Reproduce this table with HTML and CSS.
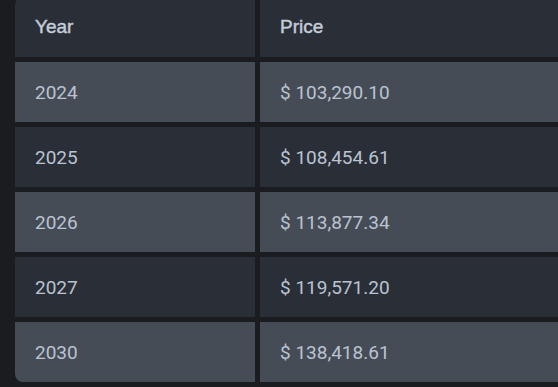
FILE: index.html
```html
<!DOCTYPE html>
<html lang="en">
<head>
<meta charset="utf-8">
<title>Price forecast</title>
<link rel="stylesheet" href="styles.css">
</head>
<body>
<table class="price-table">
  <thead>
    <tr><th class="col-year">Year</th><th>Price</th></tr>
  </thead>
  <tbody>
    <tr class="row-light"><td>2024</td><td>$ 103,290.10</td></tr>
    <tr class="row-dark"><td>2025</td><td>$ 108,454.61</td></tr>
    <tr class="row-light"><td>2026</td><td>$ 113,877.34</td></tr>
    <tr class="row-dark"><td>2027</td><td>$ 119,571.20</td></tr>
    <tr class="row-light"><td>2030</td><td>$ 138,418.61</td></tr>
  </tbody>
</table>
</body>
</html>
```
FILE: styles.css
```css
html, body {
  margin: 0;
  padding: 0;
  background: #1b1c20;
  overflow: hidden;
  width: 558px;
  height: 387px;
}

.price-table {
  border-collapse: separate;
  border-spacing: 5px;
  width: 563px;
  margin: -8px 0 0 10px;
  table-layout: fixed;
}

.price-table th,
.price-table td {
  height: 60px;
  padding: 0 0 0 20px;
  text-align: left;
  vertical-align: middle;
  box-sizing: border-box;
}

.price-table th {
  background: #2a2f37;
  color: #c4ccd9;
  font-family: "Liberation Sans", Arial, sans-serif;
  font-weight: 400;
  font-size: 19px;
  -webkit-text-stroke: 0.45px #c4ccd9;
}

.price-table .col-year {
  width: 240px;
  border-top-left-radius: 8px;
}

.price-table td {
  font-family: Roboto, "Liberation Sans", sans-serif;
  font-size: 19px;
  color: #b9c3d1;
}

.row-light td {
  background: #464c56;
}

.row-dark td {
  background: #2a2f37;
}

.price-table tbody tr:last-child td:first-child {
  border-bottom-left-radius: 8px;
}
```
